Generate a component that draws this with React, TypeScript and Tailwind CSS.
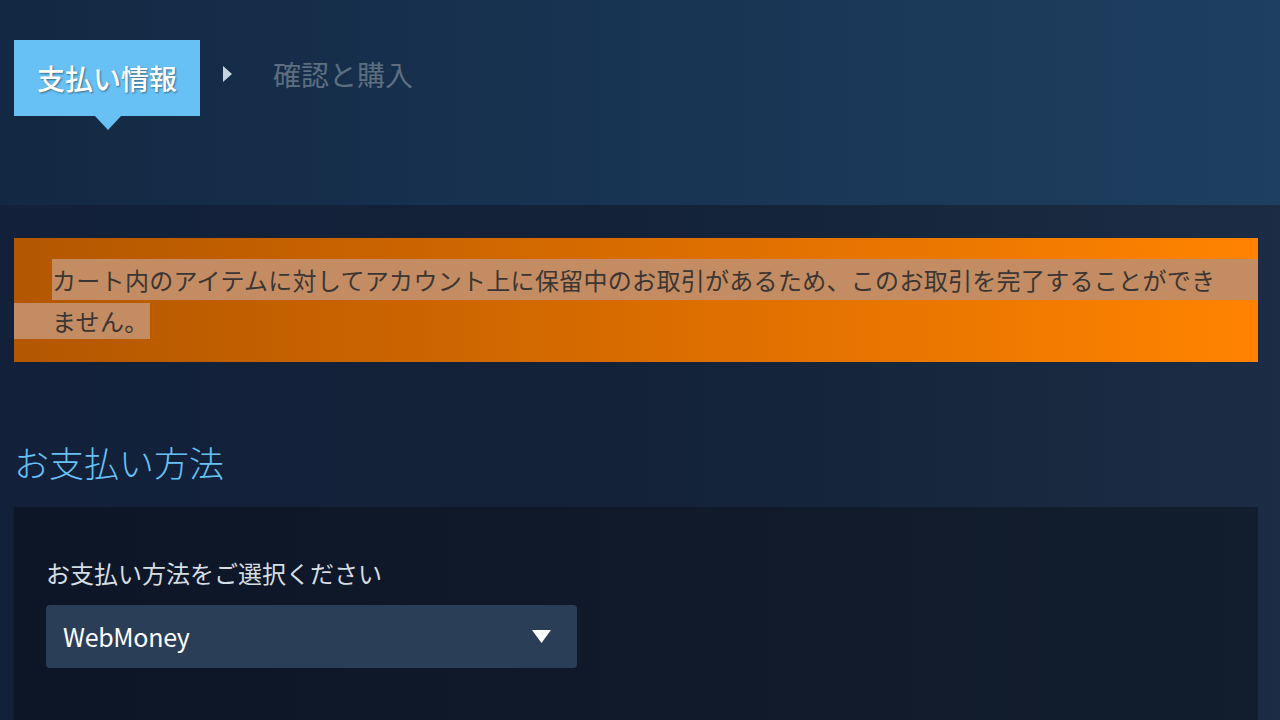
import React from "react";

const font = { fontFamily: '"Noto Sans CJK JP", "Noto Sans", sans-serif' };

function Steps() {
  return (
    <div className="flex items-start pt-[40px] pl-[14px]">
      {/* active step */}
      <div className="relative flex h-[76px] w-[186px] items-center justify-center bg-[#67c1f5]">
        <span className="text-[28px] font-medium leading-none text-white [text-shadow:1px_1px_2px_rgba(0,0,0,0.45)]">
          支払い情報
        </span>
        <div className="absolute left-[81px] top-[76px] h-0 w-0 border-x-[13px] border-t-[14px] border-x-transparent border-t-[#67c1f5]" />
      </div>
      <svg className="ml-[22px] mt-[26px]" width="11" height="16" viewBox="0 0 11 16">
        <path d="M1 0 L10 8 L1 16 Z" fill="#c6d4df" />
      </svg>
      <span className="ml-[40px] mt-[20px] text-[28px] leading-none text-[#5d6e80]">確認と購入</span>
    </div>
  );
}

function Banner() {
  return (
    <div className="h-[124px] bg-gradient-to-r from-[#b35700] via-[#d96c00] to-[#ff8300] pt-[21px] text-[24px] leading-[41px] tracking-[0.3px] text-[#3b3633]">
      <div className="ml-[38px] bg-[#c48c62] whitespace-nowrap">
        カート内のアイテムに対してアカウント上に保留中のお取引があるため、このお取引を完了することができ
      </div>
      <div className="inline-block bg-[#c48c62] pl-[38px] pr-[2px] leading-[36px]">ません。</div>
    </div>
  );
}

function PaymentPanel() {
  return (
    <div className="h-[260px] bg-gradient-to-r from-[#0d1626] to-[#121d2e] pl-[32px] pt-[50px]">
      <div className="text-[24px] leading-[32px] text-[#d6dde3]">お支払い方法をご選択ください</div>
      <div className="mt-[16px] flex h-[63px] w-[531px] items-center justify-between rounded-[4px] bg-[#2b3e57] pl-[17px] pr-[26px]">
        <span className="text-[25px] tracking-[-0.3px] text-white">WebMoney</span>
        <svg width="19" height="13" viewBox="0 0 19 13">
          <path d="M0 0 H19 L9.5 13 Z" fill="#ffffff" />
        </svg>
      </div>
    </div>
  );
}

export default function App() {
  return (
    <div className="h-[720px] w-[1280px] overflow-hidden bg-[#14233a]" style={font}>
      <div className="h-[205px] bg-gradient-to-r from-[#132842] via-[#183453] to-[#1e3f60]">
        <Steps />
      </div>
      <div className="h-[515px] bg-gradient-to-r from-[#12203a] via-[#132238] to-[#1b2c44] pl-[14px] pr-[22px] pt-[33px]">
        <Banner />
        <h2 className="mt-[76px] text-[35px] font-light leading-[48px] text-[#67c1f5]">お支払い方法</h2>
        <div className="mt-[21px]">
          <PaymentPanel />
        </div>
      </div>
    </div>
  );
}
